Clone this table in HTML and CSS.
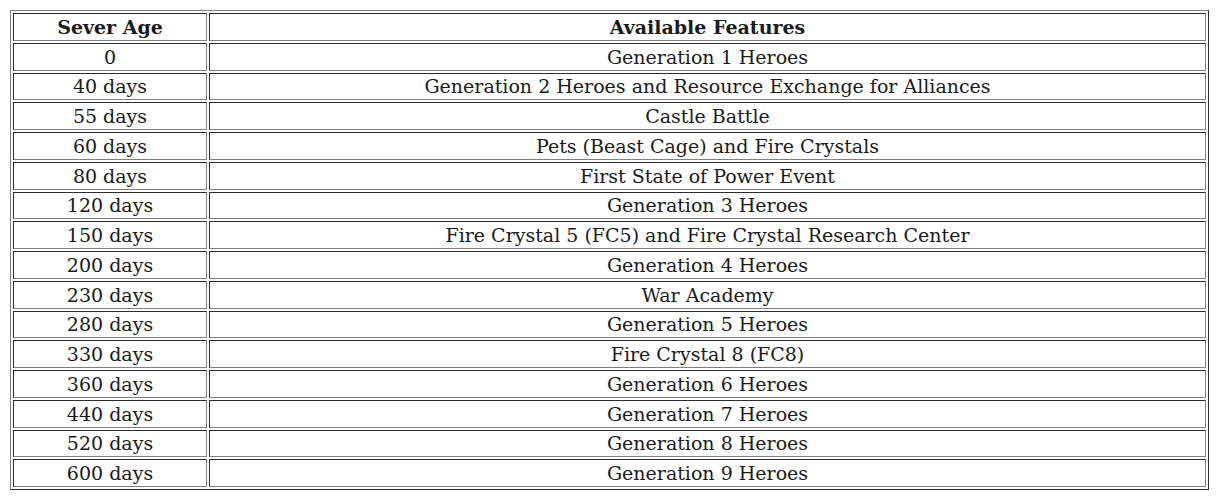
FILE: index.html
```html
<!DOCTYPE html>
<html>
<head>
<meta charset="utf-8">
<link rel="stylesheet" href="styles.css">
</head>
<body>
<table class="features">
  <thead>
    <tr><th class="age">Sever Age</th><th class="feat">Available Features</th></tr>
  </thead>
  <tbody>
    <tr><td>0</td><td>Generation 1 Heroes</td></tr>
    <tr><td>40 days</td><td>Generation 2 Heroes and Resource Exchange for Alliances</td></tr>
    <tr><td>55 days</td><td>Castle Battle</td></tr>
    <tr><td>60 days</td><td>Pets (Beast Cage) and Fire Crystals</td></tr>
    <tr><td>80 days</td><td>First State of Power Event</td></tr>
    <tr><td>120 days</td><td>Generation 3 Heroes</td></tr>
    <tr><td>150 days</td><td>Fire Crystal 5 (FC5) and Fire Crystal Research Center</td></tr>
    <tr><td>200 days</td><td>Generation 4 Heroes</td></tr>
    <tr><td>230 days</td><td>War Academy</td></tr>
    <tr><td>280 days</td><td>Generation 5 Heroes</td></tr>
    <tr><td>330 days</td><td>Fire Crystal 8 (FC8)</td></tr>
    <tr><td>360 days</td><td>Generation 6 Heroes</td></tr>
    <tr><td>440 days</td><td>Generation 7 Heroes</td></tr>
    <tr><td>520 days</td><td>Generation 8 Heroes</td></tr>
    <tr><td>600 days</td><td>Generation 9 Heroes</td></tr>
  </tbody>
</table>
</body>
</html>
```

FILE: styles.css
```css
html, body {
  background: #fff;
}
body {
  margin: 10px;
  font-family: "DejaVu Serif", serif;
  font-size: 19px;
  color: #1a1a1a;
}
.features {
  width: 1199px;
  border: 1px outset #808080;
  border-spacing: 2px;
  table-layout: fixed;
}
.features th,
.features td {
  border: 1px inset #808080;
  height: 25.75px;
  padding: 0 1px;
  text-align: center;
  vertical-align: middle;
  line-height: 22px;
}
.features th {
  font-weight: bold;
}
.features .age {
  width: 190px;
}
```
